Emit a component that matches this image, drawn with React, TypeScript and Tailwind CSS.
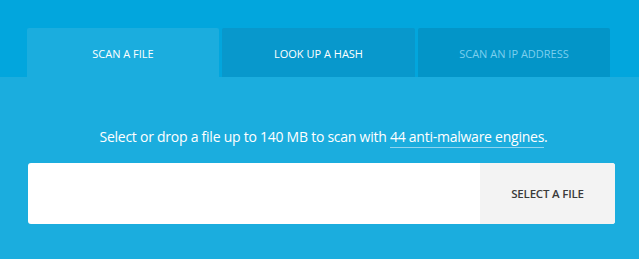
export default function App() {
  return (
    <div className="w-[639px] h-[259px] bg-[#1badde] font-['Open_Sans',sans-serif] overflow-hidden">
      {/* TAB BAR */}
      <div className="bg-[#02a6dd] h-[77px] flex items-end px-[27px] gap-[3px]">
        <div className="w-[192px] h-[49px] pt-[4px] bg-[#1badde] rounded-t-[2px] flex items-center justify-center text-white text-[11px]">
          SCAN A FILE
        </div>
        <div className="w-[193px] h-[49px] pt-[4px] bg-[#0898cc] rounded-t-[2px] flex items-center justify-center text-white text-[11px]">
          LOOK UP A HASH
        </div>
        <div className="w-[192px] h-[49px] pt-[4px] bg-[#0395c8] rounded-t-[2px] flex items-center justify-center text-[#7ccfee] text-[11px]">
          SCAN AN IP ADDRESS
        </div>
      </div>

      {/* BODY */}
      <div className="px-[28px] pt-[50px]">
        <p className="text-center text-white text-[14px] tracking-[-0.25px] leading-[20px] pl-[8px]">
          Select or drop a file up to 140 MB to scan with{" "}
          <span className="border-b border-[#8fd4ef] pb-[1px]">44 anti-malware engines</span>.
        </p>
        <div className="mt-[16px] w-[587px] h-[61px] bg-white rounded-[3px] flex overflow-hidden">
          <div className="flex-1" />
          <div className="w-[135px] bg-[#f3f3f3] flex items-center justify-center text-[#3a3a3a] text-[11.5px] font-semibold tracking-[-0.2px]">
            SELECT A FILE
          </div>
        </div>
      </div>
    </div>
  );
}
